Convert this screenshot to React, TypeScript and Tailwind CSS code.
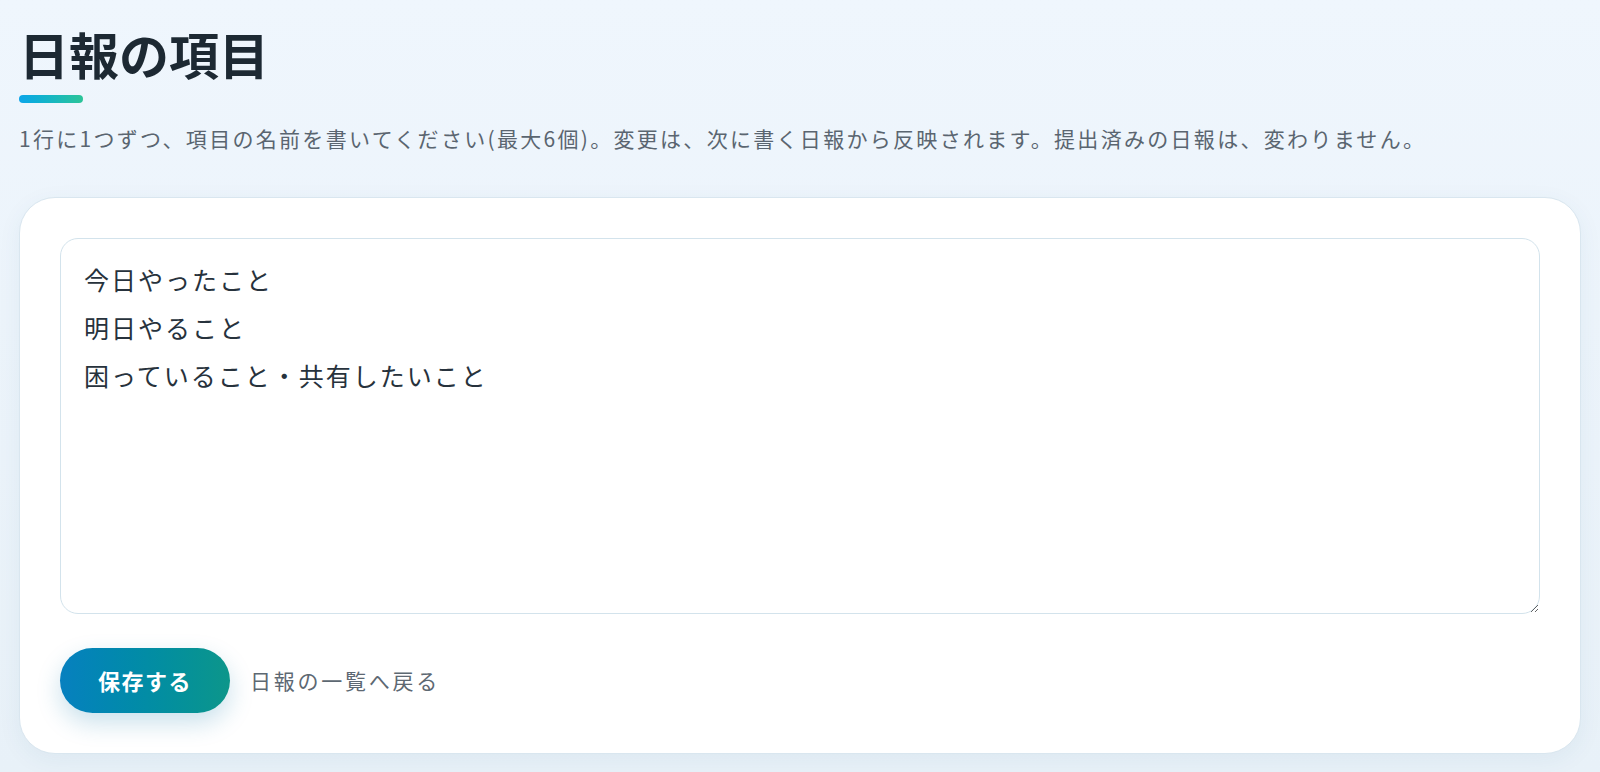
import React from "react";

export default function App() {
  return (
    <div className="min-h-screen bg-gradient-to-b from-[#eff6fd] to-[#e8f1f8] px-[19px] pt-[28px] pb-[20px] font-['Noto_Sans_CJK_JP',sans-serif]">
      <h1 className="text-[50px] font-bold leading-none text-[#1d2933]">日報の項目</h1>
      <div className="mt-[17px] h-2 w-16 rounded-full bg-gradient-to-r from-[#0ea5e9] to-[#2cc497]" />
      <p className="mt-[21px] text-[21px] leading-[28px] tracking-[2.3px] text-[#5a6570]">
        1行に1つずつ、項目の名前を書いてください(最大6個)。変更は、次に書く日報から反映されます。提出済みの日報は、変わりません。
      </p>
      <div className="mt-[45px] rounded-[36px] border border-[#d9e6ef] bg-white p-10 shadow-[0_6px_24px_rgba(30,80,120,0.06)]">
        <textarea
          className="block h-[376px] w-full rounded-[18px] border border-[#d3e3ec] bg-white px-[23px] py-[16px] text-[25px] leading-[48px] tracking-[2px] text-[#27323c] outline-none"
          defaultValue={"今日やったこと\n明日やること\n困っていること・共有したいこと"}
        />
        <div className="mt-[34px] flex items-center gap-[20px]">
          <button className="h-[65px] w-[170px] rounded-full bg-gradient-to-r from-[#0780bf] to-[#0d968a] text-[22px] font-bold tracking-[1.5px] text-white shadow-[0_10px_24px_rgba(14,120,170,0.22)]">
            保存する
          </button>
          <a className="text-[21px] tracking-[2.75px] text-[#5d6872]">日報の一覧へ戻る</a>
        </div>
      </div>
    </div>
  );
}
